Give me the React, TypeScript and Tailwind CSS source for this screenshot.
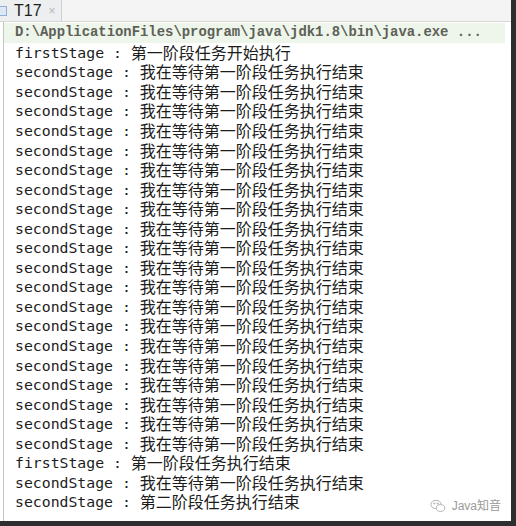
const mono = "font-['DejaVu_Sans_Mono','Liberation_Mono',monospace]";

const lines: [string, string][] = [
  ["firstStage : ", "第一阶段任务开始执行"],
  ...Array.from({ length: 20 }, () => ["secondStage : ", "我在等待第一阶段任务执行结束"] as [string, string]),
  ["firstStage : ", "第一阶段任务执行结束"],
  ["secondStage : ", "我在等待第一阶段任务执行结束"],
  ["secondStage : ", "第二阶段任务执行结束"],
];

function WeChatMark() {
  return (
    <svg width="16" height="14" viewBox="0 0 16 14" fill="none" stroke="#b5b5b5" strokeWidth="1">
      <ellipse cx="6" cy="5.5" rx="5" ry="4.2" />
      <ellipse cx="10.5" cy="9" rx="4.2" ry="3.4" fill="white" />
      <circle cx="4.2" cy="4.5" r="0.6" fill="#b5b5b5" />
      <circle cx="7.6" cy="4.5" r="0.6" fill="#b5b5b5" />
    </svg>
  );
}

export default function App() {
  return (
    <div className="relative w-[516px] h-[526px] bg-white overflow-hidden flex flex-col border-r-[5px] border-b-[5px] border-[#2e2e2e]">
      {/* tab bar */}
      <div className="h-[22px] shrink-0 flex bg-[#f4f4f4] border-b border-[#d6d6d6]">
        <div className="w-[62px] flex items-center gap-[7px] bg-[#eceef0] border-r border-[#d0d0d0]">
          <div className="w-[7px] h-[10px] border border-l-0 border-[#8fb0d0] bg-[#dce9f5]"></div>
          <span className="text-[16px] leading-none text-[#1e1e1e] font-['Liberation_Sans',sans-serif]">T17</span>
          <span className="text-[12px] leading-none text-[#b8b8b8] font-['Liberation_Sans',sans-serif]">×</span>
        </div>
      </div>

      {/* console output */}
      <div className="flex-1 ml-[3px] border-l border-[#c4c4c4] pt-[1px] pr-[6px]">
        <div className="h-[19.5px] bg-[#eef5ea] pl-[11px] leading-[19.5px] text-[13.9px] font-bold text-[#5d6158] font-['Liberation_Mono',monospace] whitespace-pre">
          D:\ApplicationFiles\program\java\jdk1.8\bin\java.exe ...
        </div>
        {lines.map(([label, msg], i) => (
          <div key={i} className="h-[19.55px] flex items-center pl-[11px] text-[#1c1c1c] whitespace-pre">
            <span className={`${mono} text-[14.8px] leading-[19px]`}>{label}</span>
            <span className="text-[16px] leading-[19px] font-['Noto_Sans_CJK_SC',sans-serif]">{msg}</span>
          </div>
        ))}
      </div>

      {/* watermark */}
      <div className="absolute right-[10px] bottom-[6px] flex items-center gap-[6px]">
        <WeChatMark />
        <span className="text-[12px] text-[#9a9a9a] font-['Liberation_Sans','Noto_Sans_CJK_SC',sans-serif]">Java知音</span>
      </div>
    </div>
  );
}
